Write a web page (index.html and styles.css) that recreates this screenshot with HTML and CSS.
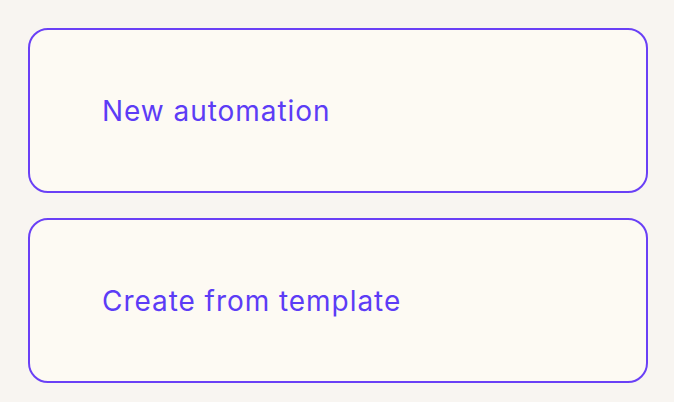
FILE: index.html
```html
<!DOCTYPE html>
<html lang="en">
  <head>
    <meta charset="UTF-8" />
    <meta name="viewport" content="width=device-width, initial-scale=1.0"/>
    <title>Automations</title>
    <link rel="stylesheet" href="styles.css">
  </head>
  <body>
    <div class="choices">
      <button class="choice">New automation</button>
      <button class="choice">Create from template</button>
    </div>
  </body>
</html>
```

FILE: styles.css
```css
* {
  margin: 0;
  padding: 0;
  box-sizing: border-box;
}

body {
  background: #f8f5f1;
  font-family: Inter, "Noto Sans", sans-serif;
  padding: 28px;
}

.choices {
  display: flex;
  flex-direction: column;
  gap: 25px;
  width: 620px;
}

.choice {
  display: flex;
  align-items: center;
  height: 165px;
  padding: 0 72px;
  background: #fdfaf3;
  border: 2px solid #6a40f6;
  border-radius: 20px;
  color: #5c3cf6;
  font-family: inherit;
  font-size: 28px;
  letter-spacing: 0.95px;
  text-align: left;
  cursor: pointer;
}
```
